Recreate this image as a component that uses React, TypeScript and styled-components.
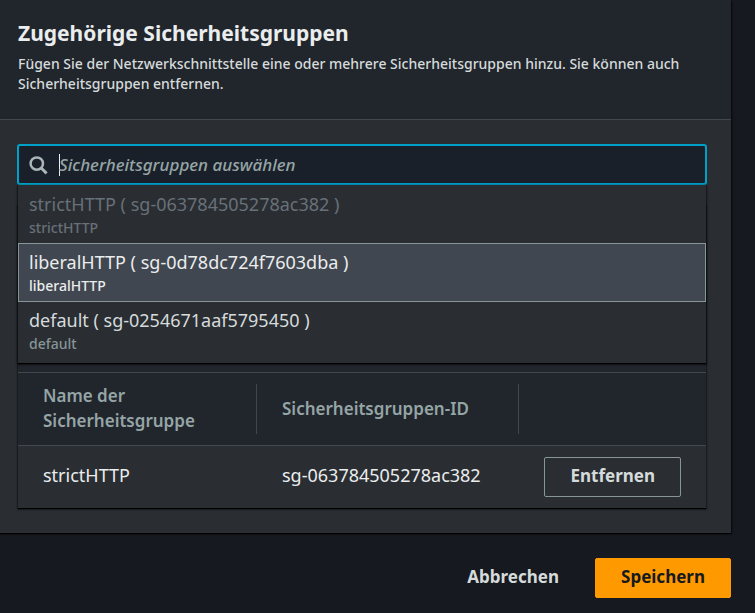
import React, { useState } from "react";
import styled, { createGlobalStyle, css } from "styled-components";

const GlobalStyle = createGlobalStyle`
  *, *::before, *::after { box-sizing: border-box; }
  body {
    margin: 0;
    background: #16191f;
    color: #d5dbdb;
    font: 500 17px/25px "Noto Sans", "Open Sans", sans-serif;
  }
`;

const Page = styled.main`
  padding-right: 24px;
`;

const Panel = styled.section`
  background: #2a2e33;
  box-shadow: 0 1px 1px #000, 1px 1px 2px rgba(0, 0, 0, 0.6);
`;

const PanelHeader = styled.header`
  padding: 19px 24px 25px 18px;
  border-bottom: 1px solid #414750;
  background: #21252c;
`;

const Title = styled.h2`
  margin: 0 0 7px;
  color: #eaeded;
  font-size: 21px;
  line-height: 28px;
  font-weight: 700;
`;

const Description = styled.p`
  margin: 0;
  font-size: 14px;
  line-height: 20px;
`;

const PanelBody = styled.div`
  padding: 24px 24px 25px 17px;
`;

const Picker = styled.div`
  position: relative;
`;

const SearchField = styled.div`
  display: flex;
  align-items: center;
  height: 41px;
  padding-left: 10px;
  border: 2px solid #00a1c9;
  border-radius: 3px;
  background: #1a2029;
`;

const SearchInput = styled.input`
  flex: 1;
  min-width: 0;
  height: 100%;
  padding: 0;
  border: 0;
  outline: 0;
  background: transparent;
  color: #d5dbdb;
  caret-color: transparent;
  font: inherit;
  &::placeholder {
    color: #95a5a6;
    font-style: italic;
    opacity: 1;
  }
`;

const SearchIcon = styled.svg`
  flex: none;
  width: 20px;
  height: 20px;
  margin-right: 10px;
`;

const Caret = styled.span`
  width: 1px;
  height: 22px;
  margin-right: -1px;
  background: #eaeded;
`;

const Options = styled.ul`
  position: absolute;
  z-index: 1;
  top: 100%;
  left: 1px;
  right: 1px;
  margin: 0;
  padding: 0 0 3px;
  background: #2a2e33;
  box-shadow: 0 1px 1px #000, 0 1px 2px 1px rgba(0, 0, 0, 0.45);
  list-style: none;
`;

const OptionRow = styled.li<{ $state: OptionState }>`
  padding: 6px 10px 3px;
  border: 1px solid transparent;
  line-height: 24px;
  cursor: pointer;
  & + & { margin-top: -1px; }
  ${({ $state }) =>
    $state === "disabled" &&
    css`
      color: #687078;
      cursor: default;
    `}
  ${({ $state }) =>
    $state === "active" &&
    css`
      position: relative;
      border-color: #879596;
      background: #414750;
      color: #eaeded;
    `}
`;

const OptionLabel = styled.div`
  font-size: 18px;
  font-weight: 400;
`;

const OptionHint = styled.div<{ $state: OptionState }>`
  color: ${({ $state }) => ($state === "normal" ? "#879596" : "inherit")};
  font-size: 14px;
`;

const Card = styled.div`
  margin: 20px 1px 0;
  background: #2a2e33;
  box-shadow: 0 1px 1px #000, 0 1px 2px 1px rgba(0, 0, 0, 0.35);
`;

const CardBar = styled.div`
  height: 167px;
  background: #21252c;
`;

const Table = styled.table`
  width: 100%;
  border-collapse: separate;
  border-spacing: 0;
  table-layout: fixed;
`;

const HeadCell = styled.th<{ $width?: string }>`
  width: ${({ $width }) => $width ?? "auto"};
  padding: 11px 0;
  border-top: 1px solid #414750;
  border-bottom: 1px solid #414750;
  background: #21252c;
  color: #95a5a6;
  font-weight: 600;
  text-align: left;
`;

const HeadText = styled.div`
  display: flex;
  align-items: center;
  height: 50px;
  padding: 0 25px 2px;
  border-right: 1px solid #414750;
`;

const Cell = styled.td`
  padding: 9px 25px 13px;
  color: #eaeded;
  font-size: 18px;
  font-weight: 400;
`;

const ActionCell = styled(Cell)`
  padding: 11px 25px 11px 0;
  text-align: right;
`;

const Button = styled.button<{ $kind: "normal" | "link" | "primary" }>`
  display: inline-block;
  min-height: 40px;
  padding: 5px 25px 8px;
  border: 1px solid transparent;
  border-radius: 2px;
  background: transparent;
  color: #d5dbdb;
  font: inherit;
  font-size: 17px;
  font-weight: 700;
  vertical-align: top;
  cursor: pointer;
  ${({ $kind }) => $kind === "normal" && css`border-color: #879596;`}
  ${({ $kind }) =>
    $kind === "primary" &&
    css`
      border-color: #ff9900;
      background: #ff9900;
      color: #16191f;
    `}
`;

const Footer = styled.footer`
  display: flex;
  justify-content: flex-end;
  gap: 10px;
  padding: 25px 0 15px;
`;

type OptionState = "disabled" | "active" | "normal";

const options: { name: string; id: string; state: OptionState }[] = [
  { name: "strictHTTP", id: "sg-063784505278ac382", state: "disabled" },
  { name: "liberalHTTP", id: "sg-0d78dc724f7603dba", state: "active" },
  { name: "default", id: "sg-0254671aaf5795450", state: "normal" },
];

export default function App() {
  const [query, setQuery] = useState("");
  return (
    <Page>
      <GlobalStyle />
      <Panel>
        <PanelHeader>
          <Title>Zugehörige Sicherheitsgruppen</Title>
          <Description>
            Fügen Sie der Netzwerkschnittstelle eine oder mehrere Sicherheitsgruppen hinzu. Sie
            können auch Sicherheitsgruppen entfernen.
          </Description>
        </PanelHeader>
        <PanelBody>
          <Picker>
            <SearchField>
              <SearchIcon viewBox="0 0 20 20" fill="none" stroke="#aab7b8" aria-hidden="true">
                <circle cx="7.8" cy="8.6" r="6.2" strokeWidth="2.5" />
                <path d="M12.2 13 17.6 18.4" strokeWidth="2.9" />
              </SearchIcon>
              {query === "" && <Caret />}
              <SearchInput
                type="text"
                role="combobox"
                aria-expanded="true"
                aria-controls="group-options"
                aria-label="Sicherheitsgruppen auswählen"
                placeholder="Sicherheitsgruppen auswählen"
                value={query}
                onChange={(e) => setQuery(e.target.value)}
              />
            </SearchField>
            <Options id="group-options" role="listbox" aria-label="Sicherheitsgruppen">
              {options.map(({ name, id, state }) => (
                <OptionRow
                  key={id}
                  $state={state}
                  role="option"
                  aria-selected={state === "active"}
                  aria-disabled={state === "disabled"}
                >
                  <OptionLabel>{`${name} ( ${id} )`}</OptionLabel>
                  <OptionHint $state={state}>{name}</OptionHint>
                </OptionRow>
              ))}
            </Options>
          </Picker>
          <Card>
            <CardBar />
            <Table>
              <thead>
                <tr>
                  <HeadCell $width="239px" scope="col">
                    <HeadText>Name der Sicherheitsgruppe</HeadText>
                  </HeadCell>
                  <HeadCell $width="262px" scope="col">
                    <HeadText>Sicherheitsgruppen-ID</HeadText>
                  </HeadCell>
                  <HeadCell as="td" />
                </tr>
              </thead>
              <tbody>
                <tr>
                  <Cell>strictHTTP</Cell>
                  <Cell>sg-063784505278ac382</Cell>
                  <ActionCell>
                    <Button type="button" $kind="normal">Entfernen</Button>
                  </ActionCell>
                </tr>
              </tbody>
            </Table>
          </Card>
        </PanelBody>
      </Panel>
      <Footer>
        <Button type="button" $kind="link">Abbrechen</Button>
        <Button type="button" $kind="primary">Speichern</Button>
      </Footer>
    </Page>
  );
}
